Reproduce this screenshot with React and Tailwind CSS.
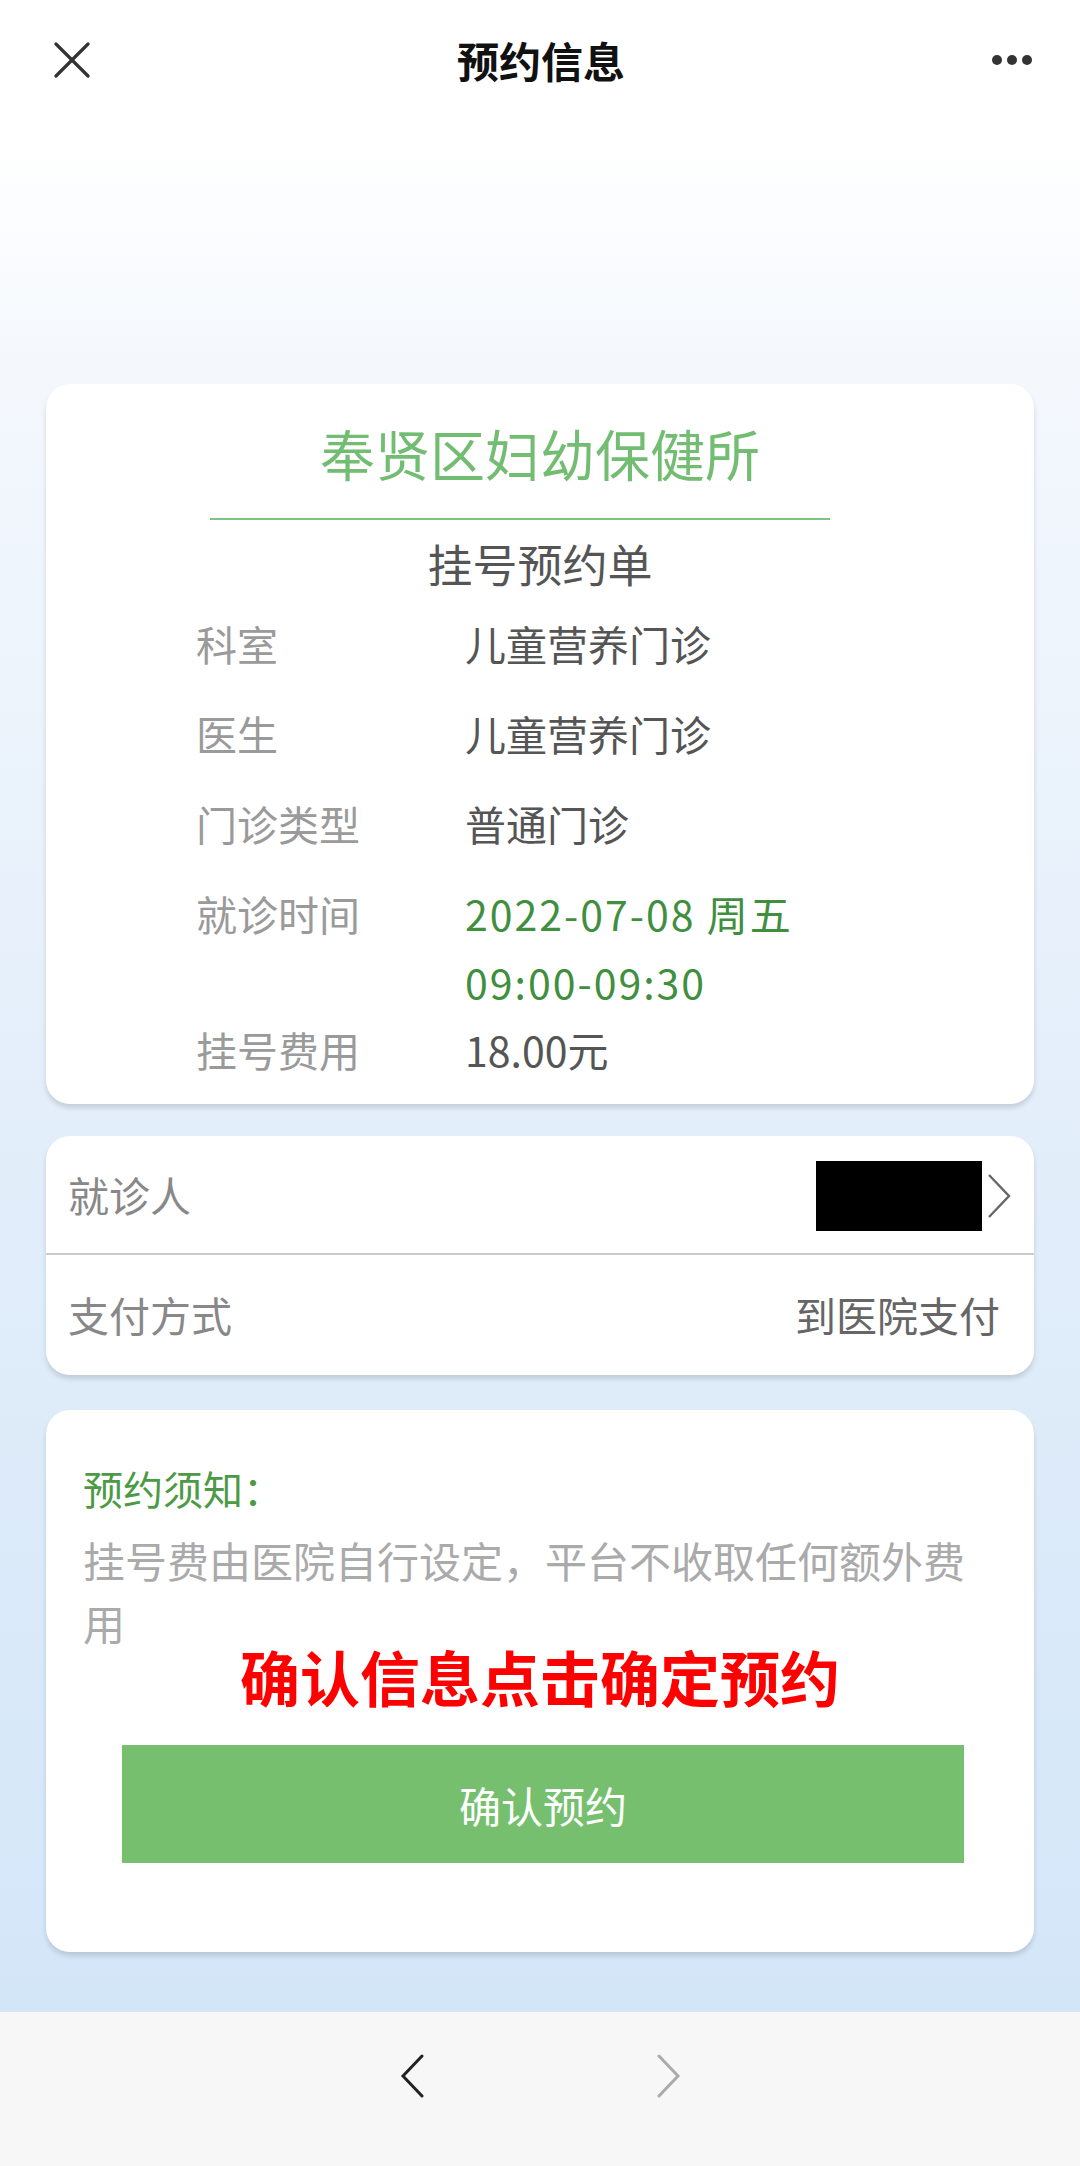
export default function App() {
  const rows = [
    { k: "科室", v: ["儿童营养门诊"] },
    { k: "医生", v: ["儿童营养门诊"] },
    { k: "门诊类型", v: ["普通门诊"] },
    { k: "就诊时间", v: ["2022-07-08 周五", "09:00-09:30"], green: true },
    { k: "挂号费用", v: ["18.00元"] },
  ];

  return (
    <div
      className="flex h-[2166px] w-[1080px] flex-col overflow-hidden"
      style={{ fontFamily: '"Noto Sans CJK SC", "Noto Sans", sans-serif' }}
    >
      <div className="flex flex-1 flex-col bg-[linear-gradient(180deg,#ffffff_0%,#ffffff_7%,#f4f8fd_18%,#e3eefa_55%,#d3e6f8_100%)]">
        {/* header */}
        <div className="flex h-[120px] items-center justify-between pl-[54px] pr-[48px]">
          <svg width="36" height="36" viewBox="0 0 36 36" className="-mt-[1px]">
            <path d="M2 2 L34 34 M34 2 L2 34" stroke="#333" strokeWidth="3.2" strokeLinecap="round" />
          </svg>
          <div className="text-[42px] font-semibold leading-none text-[#111]">预约信息</div>
          <div className="flex items-center gap-[5px]">
            <span className="h-[10px] w-[10px] rounded-full bg-[#333]" />
            <span className="h-[10px] w-[10px] rounded-full bg-[#333]" />
            <span className="h-[10px] w-[10px] rounded-full bg-[#333]" />
          </div>
        </div>

        <div className="flex flex-col gap-[32px] px-[46px] pt-[264px]">
          {/* card 1 */}
          <div className="rounded-[24px] bg-white pb-[21px] pt-[38px] shadow-[0_4px_5px_rgba(0,0,0,0.13)]">
            <div className="text-center text-[55px] leading-[60px] text-[#72bd72]">奉贤区妇幼保健所</div>
            <div className="ml-[164px] mt-[36px] h-[2px] w-[620px] bg-[#7dc67d]" />
            <div className="mt-[16px] text-center text-[45px] leading-[56px] text-[#555]">挂号预约单</div>
            <div className="mt-[17px] flex flex-col pl-[150px]">
              {rows.map((r, i) => (
                <div key={r.k} className={`flex ${i < 3 ? "mb-[22px]" : ""}`}>
                  <div className="w-[269px] text-[41px] leading-[68px] text-[#9a9a9a]">{r.k}</div>
                  <div
                    className={`text-[41px] leading-[68px] ${
                      r.green ? "tracking-[2px] text-[#3f8f3f]" : "text-[#555]"
                    }`}
                  >
                    {r.v.map((line) => (
                      <div key={line}>{line}</div>
                    ))}
                  </div>
                </div>
              ))}
            </div>
          </div>

          {/* card 2 */}
          <div className="rounded-[24px] bg-white shadow-[0_4px_5px_rgba(0,0,0,0.13)]">
            <div className="flex h-[117px] items-center justify-between pl-[22px] pr-[22px]">
              <span className="text-[41px] text-[#888]">就诊人</span>
              <div className="flex items-center gap-[4px] pt-[2px]">
                <div className="h-[70px] w-[166px] bg-black" />
                <svg width="26" height="46" viewBox="0 0 26 46">
                  <path d="M3 2 L23 23 L3 44" fill="none" stroke="#666" strokeWidth="2.4" />
                </svg>
              </div>
            </div>
            <div className="h-[2px] bg-[#cacaca]" />
            <div className="flex h-[120px] items-center justify-between pl-[22px] pr-[34px]">
              <span className="text-[41px] text-[#888]">支付方式</span>
              <span className="text-[41px] text-[#666]">到医院支付</span>
            </div>
          </div>

          {/* card 3 */}
          <div className="mt-[3px] rounded-[24px] bg-white pb-[89px] pt-[50px] shadow-[0_4px_5px_rgba(0,0,0,0.13)]">
            <div className="pl-[37px] pr-[50px]">
              <div className="text-[40px] leading-[56px] text-[#4c9a45]">预约须知：</div>
              <p className="mt-[12px] text-[42px] leading-[63px] text-[#aaa]">
                挂号费由医院自行设定，平台不收取任何额外费用
              </p>
            </div>
            <div className="text-center text-[60px] font-bold leading-[44px] text-[#ff0000]">
              确认信息点击确定预约
            </div>
            <button className="ml-[76px] mt-[47px] flex h-[118px] w-[842px] items-center justify-center bg-[#76bf6f] text-[42px] text-white">
              确认预约
            </button>
          </div>
        </div>
      </div>

      {/* bottom bar */}
      <div className="flex h-[154px] items-center justify-center gap-[233px] bg-[#f7f7f7] pb-[26px]">
        <svg width="24" height="44" viewBox="0 0 24 44">
          <path d="M22 2 L3 22 L22 42" fill="none" stroke="#222" strokeWidth="3" strokeLinecap="round" />
        </svg>
        <svg width="24" height="44" viewBox="0 0 24 44">
          <path d="M2 2 L21 22 L2 42" fill="none" stroke="#aaa" strokeWidth="3" strokeLinecap="round" />
        </svg>
      </div>
    </div>
  );
}
